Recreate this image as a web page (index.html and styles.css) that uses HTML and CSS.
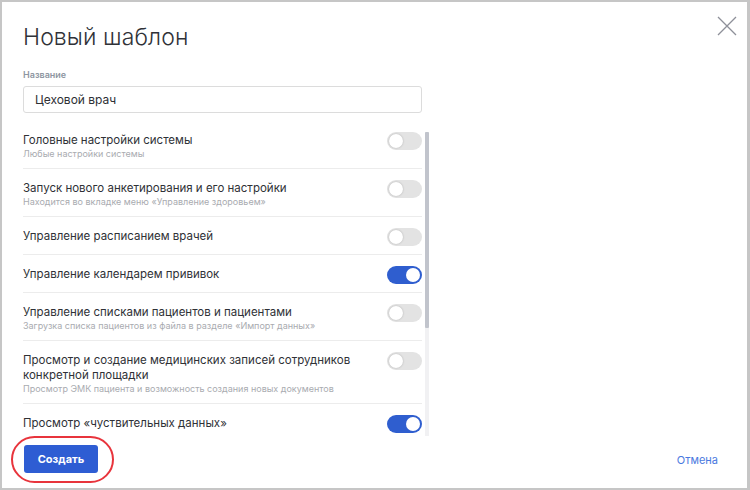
FILE: index.html
```html
<!DOCTYPE html>
<html lang="ru">
<head>
<meta charset="utf-8">
<link rel="stylesheet" href="styles.css">
</head>
<body>
<div class="dialog">
  <header class="head">
    <h1 class="title">Новый шаблон</h1>
    <button class="close" aria-label="Закрыть">
      <svg width="20" height="20" viewBox="0 0 20 20"><path d="M1 1 L19 19 M19 1 L1 19" stroke="#8e9099" stroke-width="1.3" fill="none"/></svg>
    </button>
  </header>
  <div class="field">
    <div class="label">Название</div>
    <div class="input">Цеховой врач</div>
  </div>
  <div class="listwrap">
    <div class="list">
      <div class="row">
        <div class="text"><div class="rt">Головные настройки системы</div><div class="rs">Любые настройки системы</div></div>
        <span class="toggle"></span>
      </div>
      <div class="row">
        <div class="text"><div class="rt">Запуск нового анкетирования и его настройки</div><div class="rs">Находится во вкладке меню «Управление здоровьем»</div></div>
        <span class="toggle"></span>
      </div>
      <div class="row">
        <div class="text"><div class="rt">Управление расписанием врачей</div></div>
        <span class="toggle"></span>
      </div>
      <div class="row">
        <div class="text"><div class="rt">Управление календарем прививок</div></div>
        <span class="toggle on"></span>
      </div>
      <div class="row">
        <div class="text"><div class="rt">Управление списками пациентов и пациентами</div><div class="rs">Загрузка списка пациентов из файла в разделе «Импорт данных»</div></div>
        <span class="toggle"></span>
      </div>
      <div class="row">
        <div class="text"><div class="rt">Просмотр и создание медицинских записей сотрудников конкретной площадки</div><div class="rs">Просмотр ЭМК пациента и возможность создания новых документов</div></div>
        <span class="toggle"></span>
      </div>
      <div class="row">
        <div class="text"><div class="rt">Просмотр «чуствительных данных»</div></div>
        <span class="toggle on"></span>
      </div>
    </div>
    <div class="scroll"><div class="thumb"></div></div>
  </div>
  <footer class="foot">
    <div class="ring"><button class="btn">Создать</button></div>
    <a class="cancel">Отмена</a>
  </footer>
</div>
</body>
</html>
```
FILE: styles.css
```css
* { box-sizing: border-box; }
html, body { margin: 0; padding: 0; }
body {
  width: 750px;
  height: 490px;
  font-family: Inter, "Open Sans", sans-serif;
  color: #2b2d33;
  background: #fff;
}
.dialog {
  width: 750px;
  height: 490px;
  border: 2px solid #c6c6c6;
  border-right-width: 3px;
  padding: 0 0 0 21px;
  display: flex;
  flex-direction: column;
}
.head {
  display: flex;
  justify-content: space-between;
  align-items: flex-start;
  height: 62px;
}
.title {
  margin: 20px 0 0 0;
  font-size: 23px;
  font-weight: 300;
  line-height: 30px;
  color: #303238;
  letter-spacing: 0.1px;
}
.close {
  margin: 14px 10px 0 0;
  padding: 0;
  border: 0;
  background: none;
  width: 20px;
  height: 20px;
}
.close svg { display: block; }
.field { width: 399px; }
.label {
  font-size: 9px;
  font-weight: 600;
  color: #8e96a1;
  line-height: 12px;
  height: 20px;
  padding-top: 5px;
}
.input {
  margin-top: 2px;
  height: 27px;
  border: 1px solid #dcdcdc;
  border-radius: 3px;
  padding: 0 11px;
  font-size: 12px;
  line-height: 25px;
  color: #2e3035;
}
.listwrap {
  margin-top: 8px;
  display: flex;
  gap: 3px;
  height: 315px;
}
.list {
  width: 399px;
  overflow: hidden;
}
.row {
  display: flex;
  justify-content: space-between;
  align-items: flex-start;
  padding: 11px 0 8px;
  border-bottom: 1px solid #ececec;
}
.text { padding-top: 1px; width: 340px; }
.rt {
  font-size: 11.5px;
  line-height: 15px;
  color: #2f3136;
}
.rs {
  font-size: 9px;
  line-height: 12px;
  color: #a9abb0;
}
.toggle {
  flex: none;
  position: relative;
  width: 35px;
  height: 18px;
  border-radius: 9px;
  background: #e3e3e3;
}
.toggle::after {
  content: "";
  position: absolute;
  left: 2px;
  top: 2px;
  width: 14px;
  height: 14px;
  border-radius: 50%;
  background: #fff;
  box-shadow: 0 0 2px rgba(0,0,0,0.25);
}
.toggle.on { background: #2f5ecf; }
.toggle.on::after { left: 19px; box-shadow: none; }
.scroll {
  width: 4px;
  margin-top: 11px;
  background: #f1f1f3;
}
.thumb {
  height: 196px;
  background: #c1c4cc;
  border-radius: 1px;
}
.foot {
  flex: 1;
  display: flex;
  justify-content: space-between;
  align-items: flex-start;
  padding-right: 29px;
}
.ring {
  margin: 0 0 0 -12px;
  border: 2px solid #e8343c;
  border-radius: 24px;
  padding: 7px 14px 8px 11px;
}
.btn {
  display: block;
  width: 74px;
  height: 28px;
  border: 0;
  border-radius: 3px;
  background: #2e5dd3;
  color: #fff;
  font-family: inherit;
  font-size: 11px;
  font-weight: 700;
  padding: 0;
}
.cancel {
  margin-top: 17px;
  font-size: 11px;
  line-height: 14px;
  color: #4a79e0;
}
```
